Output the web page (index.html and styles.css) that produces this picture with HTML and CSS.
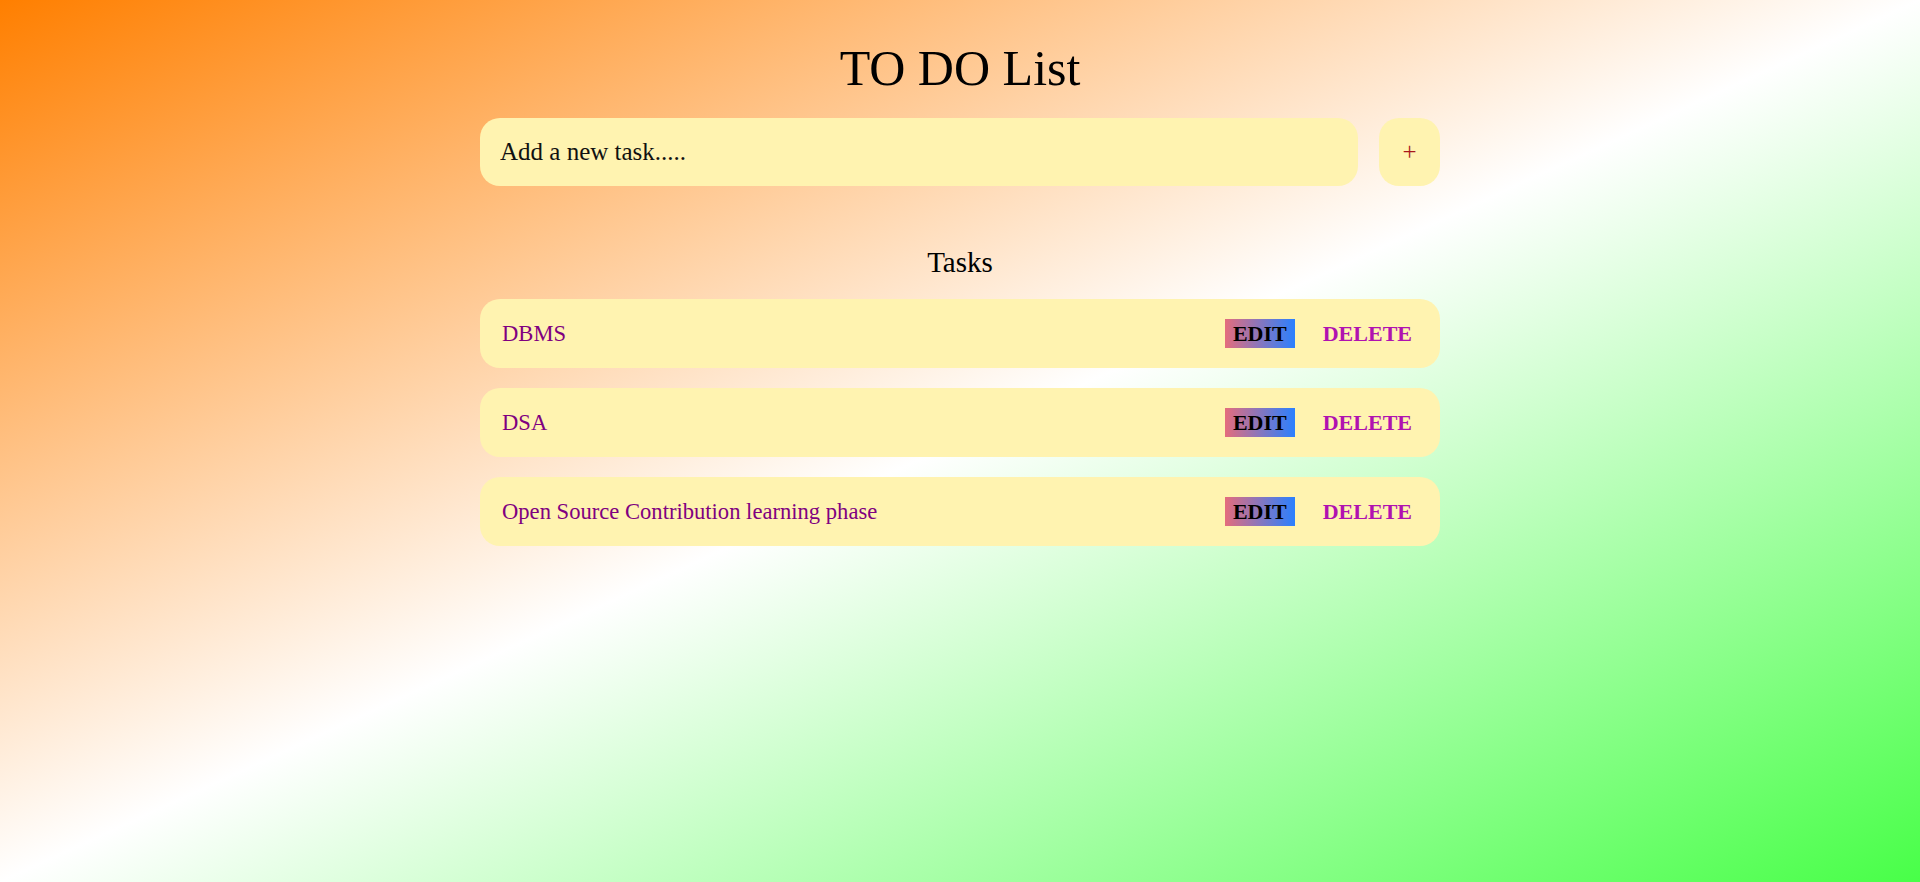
FILE: index.html
```html
<!DOCTYPE html>
<html lang="en">
<head>
<meta charset="utf-8">
<title>TO DO List</title>
<link rel="stylesheet" href="styles.css">
</head>
<body>
<main class="app">
  <h1 class="title">TO DO List</h1>
  <div class="new-task">
    <input class="task-input" type="text" placeholder="Add a new task.....">
    <button class="add-btn" type="button">+</button>
  </div>
  <h2 class="tasks-title">Tasks</h2>
  <ul class="task-list">
    <li class="task">
      <span class="task-text">DBMS</span>
      <div class="actions">
        <button class="edit-btn" type="button">EDIT</button>
        <button class="delete-btn" type="button">DELETE</button>
      </div>
    </li>
    <li class="task">
      <span class="task-text">DSA</span>
      <div class="actions">
        <button class="edit-btn" type="button">EDIT</button>
        <button class="delete-btn" type="button">DELETE</button>
      </div>
    </li>
    <li class="task">
      <span class="task-text">Open Source Contribution learning phase</span>
      <div class="actions">
        <button class="edit-btn" type="button">EDIT</button>
        <button class="delete-btn" type="button">DELETE</button>
      </div>
    </li>
  </ul>
</main>
</body>
</html>
```

FILE: styles.css
```css
html {
  height: 100%;
}

body {
  margin: 0;
  min-height: 100%;
  font-family: "Liberation Serif", "Times New Roman", serif;
  background: linear-gradient(to bottom right, #ff7f00, #ffffff, #48ff48);
  background-attachment: fixed;
}

.app {
  width: 50%;
  margin: 0 auto;
  padding-top: 39px;
}

.title {
  margin: 0 0 21px;
  font-size: 50px;
  font-weight: normal;
  text-align: center;
  color: #000;
}

.new-task {
  display: flex;
  gap: 21px;
}

.task-input {
  flex: 1;
  min-width: 0;
  padding: 20px;
  border: none;
  border-radius: 20px;
  outline: none;
  background: #fff3b0;
  font-family: "Liberation Serif", "Times New Roman", serif;
  font-size: 25px;
  color: #000;
  caret-color: purple;
}

.task-input::placeholder {
  color: #111;
  opacity: 1;
}

.add-btn {
  width: 61px;
  padding: 0;
  border: none;
  border-radius: 20px;
  background: #fff3b0;
  font-family: "Liberation Serif", "Times New Roman", serif;
  font-size: 25px;
  color: #a8161c;
}

.tasks-title {
  margin: 60px 0 20px;
  font-size: 29px;
  font-weight: normal;
  text-align: center;
  color: #000;
}

.task-list {
  list-style: none;
  margin: 0;
  padding: 0;
  display: flex;
  flex-direction: column;
  gap: 20px;
}

.task {
  display: flex;
  align-items: center;
  justify-content: space-between;
  padding: 20px 20px 20px 22px;
  border-radius: 20px;
  background: #fff3b0;
}

.task-text {
  font-size: 22.6px;
  color: #800080;
}

.actions {
  display: flex;
  align-items: center;
  gap: 20px;
}

.edit-btn,
.delete-btn {
  padding: 1.5px 8px;
  border: none;
  font-family: "Liberation Serif", "Times New Roman", serif;
  font-size: 22px;
  font-weight: bold;
}

.edit-btn {
  background: linear-gradient(to right, #e46c7c, #2a80ff);
  color: #000;
}

.delete-btn {
  background: transparent;
  color: #b012b0;
}
```
